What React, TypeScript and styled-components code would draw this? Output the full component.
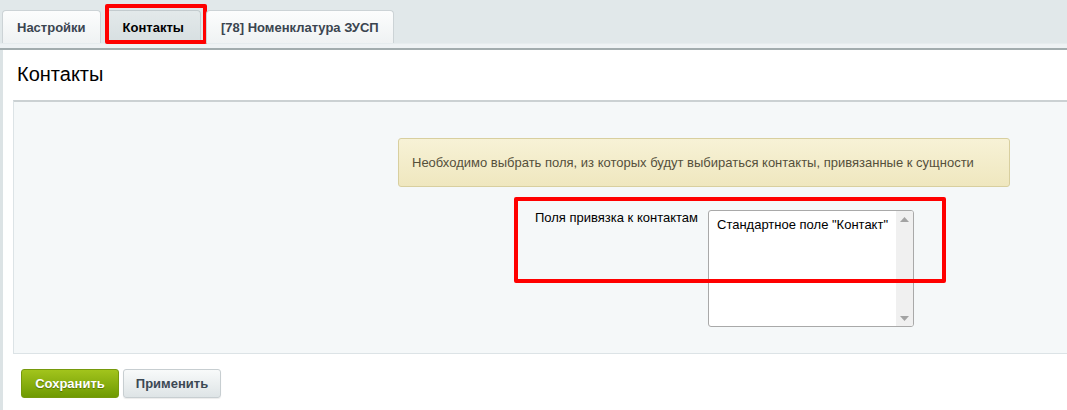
import React from "react";
import styled, { createGlobalStyle, css } from "styled-components";

const GlobalStyle = createGlobalStyle`
  html, body { margin: 0; padding: 0; background: #ffffff; }
  body { font-family: "Liberation Sans", Arial, sans-serif; font-size: 13px; color: #000; }
  *, *::before, *::after { box-sizing: border-box; }
`;

const Page = styled.div`
  width: 1067px;
  height: 410px;
  overflow: hidden;
  display: flex;
  flex-direction: column;
`;

const TabBar = styled.div`
  height: 43px;
  background: #e1e8ea;
  display: flex;
  align-items: flex-end;
  padding-left: 2px;
  gap: 5px;
`;

const Annotation = css`
  content: "";
  position: absolute;
  border: 4px solid #ff0000;
  border-radius: 2px;
  pointer-events: none;
`;

const Tab = styled.div<{ $active?: boolean }>`
  position: relative;
  height: 33px;
  display: flex;
  align-items: center;
  padding: 0 14px;
  font-weight: bold;
  font-size: 13px;
  color: #3b4550;
  border: 1px solid #ccd3d6;
  border-bottom: none;
  border-radius: 4px 4px 0 0;
  background: linear-gradient(#fcfdfd, #eff2f3);
  ${(p) =>
    p.$active &&
    css`
      padding: 0 16px;
      color: #000;
      background: linear-gradient(#e3e9ea, #d7dfe1);
      border-color: #c3cbce;
      &::after {
        ${Annotation};
        left: -2px;
        right: -7px;
        top: -7px;
        bottom: -1px;
      }
    `}
`;

const TabDivider = styled.div`
  height: 7px;
  background: #eef2f4;
  border-top: 1px solid #e6ecee;
  border-bottom: 2px solid #a2acae;
`;

const Panel = styled.div`
  flex: 1;
  background: #fff;
  border-left: 3px solid #dce3e5;
  display: flex;
  flex-direction: column;
`;

const Heading = styled.h1`
  margin: 0;
  height: 50px;
  padding: 12px 0 0 14px;
  font-size: 20px;
  line-height: 24px;
  font-weight: normal;
  color: #000;
`;

const FormBox = styled.div`
  margin-left: 10px;
  height: 254px;
  background: #f5f8f9;
  border-top: 2px solid #cbd1d3;
  border-left: 1px solid #dce3e6;
  border-bottom: 1px solid #dce3e6;
  padding-top: 36px;
  display: flex;
  flex-direction: column;
`;

const Note = styled.div`
  margin-left: 384px;
  width: 612px;
  height: 49px;
  display: flex;
  align-items: center;
  padding-left: 13px;
  background: linear-gradient(#f7f2d6, #efe7bf);
  border: 1px solid #d8cf9f;
  border-radius: 3px;
  color: #55503b;
  font-size: 13px;
`;

const FieldRow = styled.div`
  position: relative;
  margin-top: 23px;
  display: grid;
  grid-template-columns: 684px 206px;
  column-gap: 10px;
  &::after {
    ${Annotation};
    left: 500px;
    width: 432px;
    top: -13px;
    height: 86px;
  }
`;

const Label = styled.div`
  text-align: right;
  font-size: 13px;
  color: #000;
`;

const ListBox = styled.div`
  height: 117px;
  border: 1px solid #a9a9a9;
  border-radius: 3px;
  background: #fff;
  display: flex;
  overflow: hidden;
`;

const Options = styled.div`
  flex: 1;
  padding: 6px 0 0 8px;
  font-size: 13px;
  color: #000;
`;

const ScrollTrack = styled.div`
  width: 17px;
  background: #f0f0f0;
  display: flex;
  flex-direction: column;
  justify-content: space-between;
  align-items: center;
  padding: 6px 0 5px;
`;

const Actions = styled.div`
  display: flex;
  gap: 4px;
  padding: 15px 0 0 18px;
`;

const Button = styled.button<{ $primary?: boolean }>`
  width: 98px;
  height: 29px;
  border-radius: 3px;
  font-family: "Liberation Sans", Arial, sans-serif;
  font-size: 13px;
  font-weight: bold;
  cursor: pointer;
  ${(p) =>
    p.$primary
      ? css`
          color: #fff;
          background: linear-gradient(#a2c41c, #6f9a02);
          border: 1px solid #76990c;
          text-shadow: 0 1px 1px rgba(0, 0, 0, 0.35);
        `
      : css`
          color: #3c4853;
          background: linear-gradient(#f8fafa, #dee4e6);
          border: 1px solid #c7ced1;
          box-shadow: 0 1px 1px rgba(0, 0, 0, 0.08);
        `}
`;

const Arrow = ({ up }: { up?: boolean }) => (
  <svg width="9" height="5" viewBox="0 0 9 5">
    <path d={up ? "M0 5 L4.5 0 L9 5 Z" : "M0 0 L4.5 5 L9 0 Z"} fill="#a3a3a3" />
  </svg>
);

export default function App() {
  return (
    <Page>
      <GlobalStyle />
      <TabBar>
        <Tab>Настройки</Tab>
        <Tab $active>Контакты</Tab>
        <Tab>[78] Номенклатура ЗУСП</Tab>
      </TabBar>
      <TabDivider />
      <Panel>
        <Heading>Контакты</Heading>
        <FormBox>
          <Note>Необходимо выбрать поля, из которых будут выбираться контакты, привязанные к сущности</Note>
          <FieldRow>
            <Label>Поля привязка к контактам</Label>
            <ListBox>
              <Options>Стандартное поле "Контакт"</Options>
              <ScrollTrack>
                <Arrow up />
                <Arrow />
              </ScrollTrack>
            </ListBox>
          </FieldRow>
        </FormBox>
        <Actions>
          <Button $primary>Сохранить</Button>
          <Button>Применить</Button>
        </Actions>
      </Panel>
    </Page>
  );
}
